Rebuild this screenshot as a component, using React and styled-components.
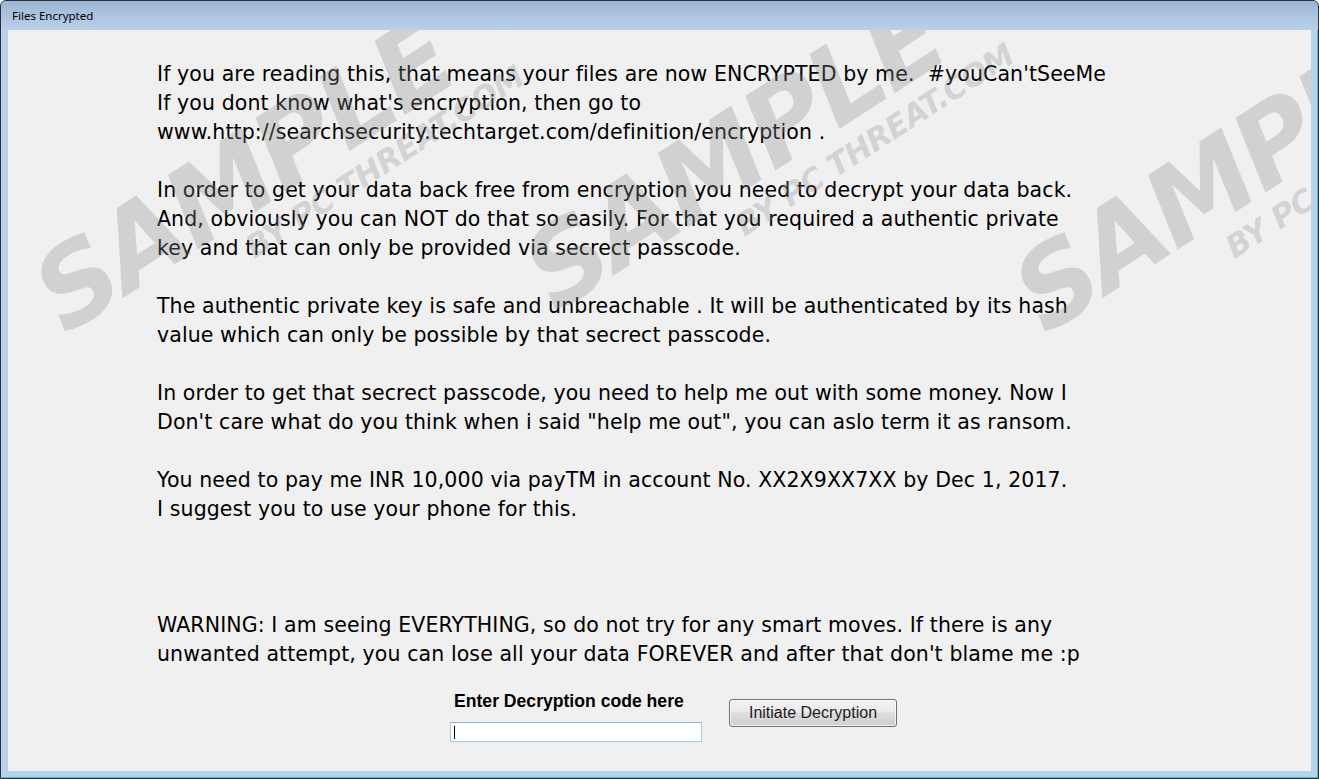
import React from "react";
import styled, { createGlobalStyle } from "styled-components";

const Global = createGlobalStyle`
  html, body { margin: 0; padding: 0; background: #ffffff; }
  body { width: 1319px; height: 779px; overflow: hidden; }
  * { box-sizing: border-box; }
`;

const Window = styled.div`
  position: relative;
  width: 1319px;
  height: 779px;
  display: flex;
  flex-direction: column;
  background: #bad1ea;
  border: 1px solid #25303c;
  border-radius: 6px 6px 0 0;
  box-shadow: inset -1px -1px 0 #38c4e4;
  padding: 0 7px 7px 7px;
  overflow: hidden;
`;

const TitleBar = styled.div`
  height: 29px;
  margin: 0 -7px;
  padding: 0 11px;
  display: flex;
  align-items: center;
  background: linear-gradient(#9db6d3, #b9d1ea);
  border-radius: 5px 5px 0 0;
  font-family: "Noto Sans", "DejaVu Sans", sans-serif;
  font-size: 11.5px;
  color: #000;
`;

const Client = styled.div`
  position: relative;
  flex: 1;
  background: #f0f0f0;
  overflow: hidden;
  padding: 30px 0 0 149px;
  display: flex;
  flex-direction: column;
`;

const Message = styled.div`
  font-family: "DejaVu Sans", sans-serif;
  font-size: 20.5px;
  letter-spacing: 0.1px;
  line-height: 29px;
  color: #000;
`;

const Line = styled.div`
  white-space: pre;
  height: 29px;
`;

const Form = styled.div`
  display: flex;
  align-items: flex-start;
  gap: 27px;
  margin: 22px 0 0 293px;
`;

const Field = styled.div`
  display: flex;
  flex-direction: column;
  gap: 11px;
`;

const Label = styled.label`
  font-family: "Liberation Sans", Arial, sans-serif;
  font-weight: 700;
  font-size: 17.6px;
  line-height: 20px;
  color: #000;
  padding-left: 4px;
  white-space: nowrap;
`;

const InputBox = styled.div`
  position: relative;
  width: 252px;
  height: 20px;
  background: #fff;
  border: 1px solid #a8c9e6;
  border-top-color: #8fb3d8;
`;

const Input = styled.input`
  width: 100%;
  height: 100%;
  border: 0;
  outline: none;
  background: transparent;
  padding: 0 3px;
  font-family: "Liberation Sans", Arial, sans-serif;
  font-size: 13px;
  caret-color: transparent;
`;

const Caret = styled.span`
  position: absolute;
  left: 3px;
  top: 3px;
  width: 1px;
  height: 13px;
  background: #000;
`;

const Button = styled.button`
  width: 168px;
  height: 28px;
  margin-top: 8px;
  border: 1px solid #707070;
  border-radius: 3px;
  background: linear-gradient(#f2f2f2 0%, #ebebeb 45%, #dddddd 50%, #cfcfcf 100%);
  box-shadow: inset 0 0 0 1px rgba(255, 255, 255, 0.7);
  font-family: "Liberation Sans", Arial, sans-serif;
  font-size: 16px;
  color: #1a1a1a;
  padding: 0;
`;

const Watermark = styled.div`
  position: absolute;
  left: ${(p) => p.$x}px;
  top: ${(p) => p.$y - 19}px;
  width: max-content;
  display: flex;
  flex-direction: column;
  transform: rotate(-33deg);
  transform-origin: 0 109px;
  pointer-events: none;
  font-family: "DejaVu Sans", sans-serif;
  font-weight: 700;
  font-style: italic;
  color: rgba(140, 140, 140, 0.3);
  white-space: nowrap;
`;

const WmBig = styled.div`
  font-size: 108px;
  line-height: 128px;
  letter-spacing: -3px;
  padding-right: 20px;
`;

const WmSub = styled.div`
  margin: -17px 0 0 200px;
  font-size: 31px;
  line-height: 36px;
  letter-spacing: -0.5px;
`;

const paragraphs = [
  [
    "If you are reading this, that means your files are now ENCRYPTED by me.  #youCan'tSeeMe",
    "If you dont know what's encryption, then go to",
    "www.http://searchsecurity.techtarget.com/definition/encryption .",
  ],
  [
    "In order to get your data back free from encryption you need to decrypt your data back.",
    "And, obviously you can NOT do that so easily. For that you required a authentic private",
    "key and that can only be provided via secrect passcode.",
  ],
  [
    "The authentic private key is safe and unbreachable . It will be authenticated by its hash",
    "value which can only be possible by that secrect passcode.",
  ],
  [
    "In order to get that secrect passcode, you need to help me out with some money. Now I",
    "Don't care what do you think when i said \"help me out\", you can aslo term it as ransom.",
  ],
  [
    "You need to pay me INR 10,000 via payTM in account No. XX2X9XX7XX by Dec 1, 2017.",
    "I suggest you to use your phone for this.",
  ],
];

const warning = [
  "WARNING: I am seeing EVERYTHING, so do not try for any smart moves. If there is any",
  "unwanted attempt, you can lose all your data FOREVER and after that don't blame me :p",
];

const marks = [
  { x: 62, y: 222 },
  { x: 552, y: 200 },
  { x: 1042, y: 222 },
];

export default function App() {
  const lines = [];
  paragraphs.forEach((p, i) => {
    if (i > 0) lines.push({ text: " " });
    p.forEach((t) => lines.push({ text: t }));
  });
  lines.push({ text: " " });
  lines.push({ text: " " });
  lines.push({ text: " " });
  warning.forEach((t) => lines.push({ text: t }));

  return (
    <>
      <Global />
      <Window>
        <TitleBar>Files Encrypted</TitleBar>
        <Client>
          <Message>
            {lines.map((l, i) => (
              <Line key={i}>{l.text}</Line>
            ))}
          </Message>
          <Form>
            <Field>
              <Label htmlFor="code">Enter Decryption code here</Label>
              <InputBox>
                <Input id="code" type="text" />
                <Caret />
              </InputBox>
            </Field>
            <Button type="button">Initiate Decryption</Button>
          </Form>
          {marks.map((m, i) => (
            <Watermark key={i} $x={m.x} $y={m.y}>
              <WmBig>SAMPLE</WmBig>
              <WmSub>BY PC THREAT.COM</WmSub>
            </Watermark>
          ))}
        </Client>
      </Window>
    </>
  );
}
